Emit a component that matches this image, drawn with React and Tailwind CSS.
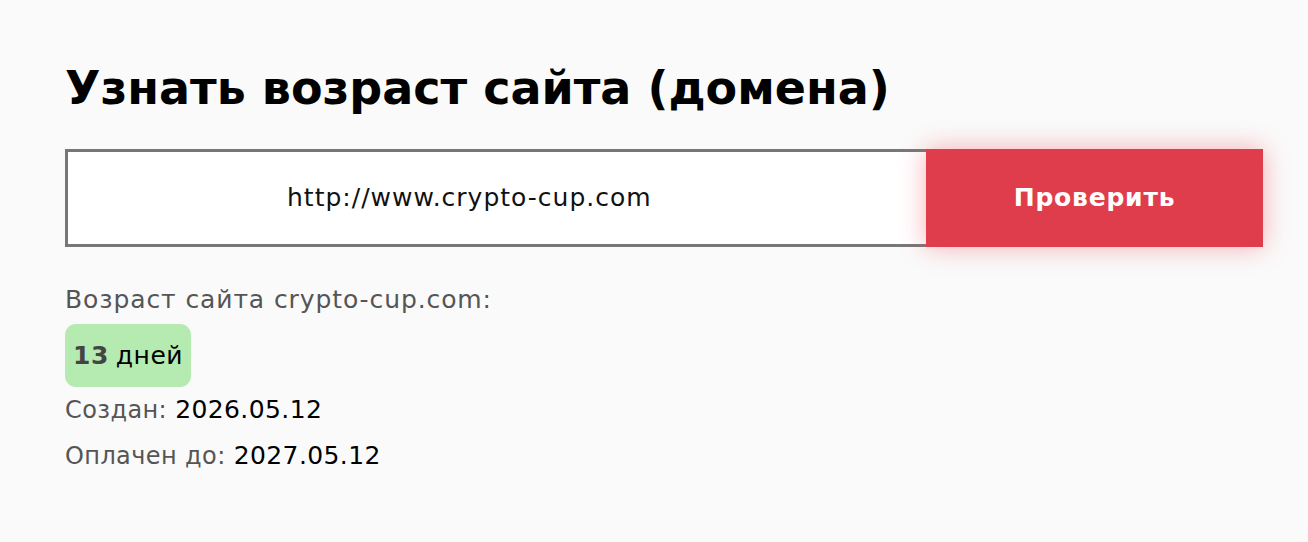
export default function App() {
  return (
    <div className="min-h-[542px] w-full bg-[#fafafa] font-['DejaVu_Sans',sans-serif]">
      <div className="pl-[65px] pr-[45px] pt-[56px]">
        <h1 className="text-[46px] font-bold leading-[64px] text-black">Узнать возраст сайта (домена)</h1>
        <div className="mt-[29px] flex h-[98px] w-[1198px]">
          <div className="flex flex-1 items-center border-[3px] border-r-0 border-[#777777] bg-white pl-[219px]">
            <span className="text-[25px] tracking-[1px] text-[#111]">http://www.crypto-cup.com</span>
          </div>
          <button className="flex w-[337px] items-center justify-center bg-[#df3d4c] text-[25px] font-bold tracking-[0.8px] text-white shadow-[0_0_24px_rgba(240,80,90,0.45)]">
            Проверить
          </button>
        </div>
        <div className="mt-[38px] text-[25px] leading-[30px] tracking-[0.9px] text-[#555]">Возраст сайта crypto-cup.com:</div>
        <div className="mt-[9px] inline-flex h-[63px] items-center rounded-[11px] bg-[#b5eab0] px-[8px] text-[25px] tracking-[0.5px]">
          <span className="font-bold text-[#444]">13</span>
          <span className="ml-[7px] text-black">дней</span>
        </div>
        <div className="mt-[8px] text-[24px] leading-[30px] tracking-[0.4px] text-[#555]">
          Создан: <span className="text-[25px] text-black">2026.05.12</span>
        </div>
        <div className="mt-[16px] text-[24px] leading-[30px] tracking-[0.4px] text-[#555]">
          Оплачен до: <span className="text-[25px] text-black">2027.05.12</span>
        </div>
      </div>
    </div>
  );
}
